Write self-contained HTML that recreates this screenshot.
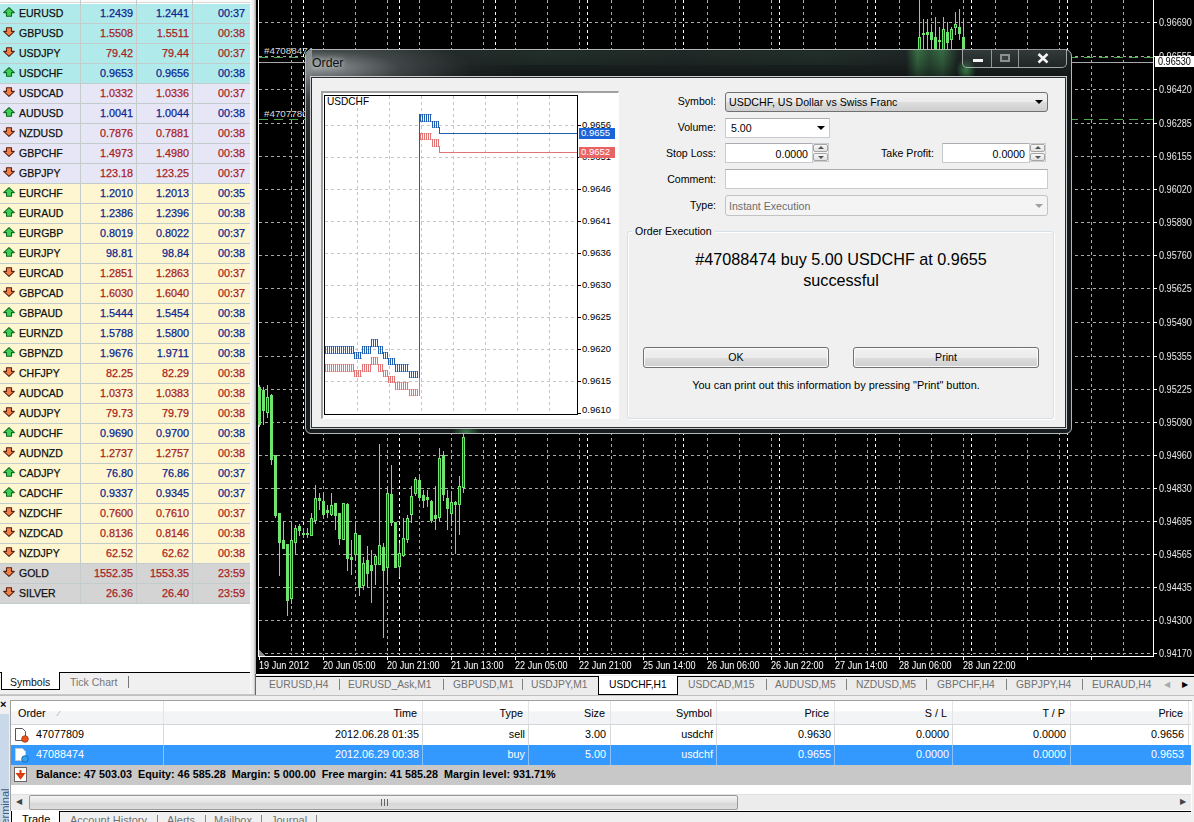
<!DOCTYPE html><html><head><meta charset="utf-8"><style>
*{margin:0;padding:0;box-sizing:border-box}
html,body{width:1194px;height:822px;overflow:hidden;background:#f0f0f0;font-family:"Liberation Sans", sans-serif;position:relative}
.a{position:absolute;white-space:nowrap}
.mw span,.tk{-webkit-text-stroke:0.25px currentColor}
.mw{position:absolute;left:0;width:250px;height:20px;border-bottom:1px solid #c3cccc;font-size:10.5px;line-height:19px}
.mw span{position:absolute;top:0}
.up{color:#0e2690}.dn{color:#a81e1e}
</style></head><body>
<div class="a" style="left:0;top:0;width:250px;height:672px;background:#fff"></div>
<div class="a" style="left:0;top:0;width:250px;height:3px;background:#fafafa;border-bottom:1px solid #d8d8d8"></div>
<div class="mw" style="top:4px;background:#b1eaea">
<svg class="a" style="left:3px;top:3px" width="12" height="10" viewBox="0 0 12 10"><path d="M6 0.7 L11.3 5.6 H8.5 V9.3 H3.5 V5.6 H0.7 Z" fill="#3fcf55" stroke="#0f6a22" stroke-width="1.1" stroke-linejoin="round"/></svg>
<span style="left:19px;color:#111">EURUSD</span>
<span class="up" style="right:117px;font-size:10.8px">1.2439</span>
<span class="up" style="right:61px;font-size:10.8px">1.2441</span>
<span class="up" style="right:5px;font-size:10.8px">00:37</span>
</div>
<div class="mw" style="top:24px;background:#b1eaea">
<svg class="a" style="left:3px;top:3px" width="12" height="10" viewBox="0 0 12 10"><path d="M3.5 0.7 H8.5 V4.4 H11.3 L6 9.3 L0.7 4.4 H3.5 Z" fill="#f08048" stroke="#5a2010" stroke-width="1.1" stroke-linejoin="round"/></svg>
<span style="left:19px;color:#111">GBPUSD</span>
<span class="dn" style="right:117px;font-size:10.8px">1.5508</span>
<span class="dn" style="right:61px;font-size:10.8px">1.5511</span>
<span class="dn" style="right:5px;font-size:10.8px">00:38</span>
</div>
<div class="mw" style="top:44px;background:#b1eaea">
<svg class="a" style="left:3px;top:3px" width="12" height="10" viewBox="0 0 12 10"><path d="M3.5 0.7 H8.5 V4.4 H11.3 L6 9.3 L0.7 4.4 H3.5 Z" fill="#f08048" stroke="#5a2010" stroke-width="1.1" stroke-linejoin="round"/></svg>
<span style="left:19px;color:#111">USDJPY</span>
<span class="dn" style="right:117px;font-size:10.8px">79.42</span>
<span class="dn" style="right:61px;font-size:10.8px">79.44</span>
<span class="dn" style="right:5px;font-size:10.8px">00:37</span>
</div>
<div class="mw" style="top:64px;background:#b1eaea">
<svg class="a" style="left:3px;top:3px" width="12" height="10" viewBox="0 0 12 10"><path d="M6 0.7 L11.3 5.6 H8.5 V9.3 H3.5 V5.6 H0.7 Z" fill="#3fcf55" stroke="#0f6a22" stroke-width="1.1" stroke-linejoin="round"/></svg>
<span style="left:19px;color:#111">USDCHF</span>
<span class="up" style="right:117px;font-size:10.8px">0.9653</span>
<span class="up" style="right:61px;font-size:10.8px">0.9656</span>
<span class="up" style="right:5px;font-size:10.8px">00:38</span>
</div>
<div class="mw" style="top:84px;background:#e6e6f7">
<svg class="a" style="left:3px;top:3px" width="12" height="10" viewBox="0 0 12 10"><path d="M3.5 0.7 H8.5 V4.4 H11.3 L6 9.3 L0.7 4.4 H3.5 Z" fill="#f08048" stroke="#5a2010" stroke-width="1.1" stroke-linejoin="round"/></svg>
<span style="left:19px;color:#111">USDCAD</span>
<span class="dn" style="right:117px;font-size:10.8px">1.0332</span>
<span class="dn" style="right:61px;font-size:10.8px">1.0336</span>
<span class="dn" style="right:5px;font-size:10.8px">00:37</span>
</div>
<div class="mw" style="top:104px;background:#e6e6f7">
<svg class="a" style="left:3px;top:3px" width="12" height="10" viewBox="0 0 12 10"><path d="M6 0.7 L11.3 5.6 H8.5 V9.3 H3.5 V5.6 H0.7 Z" fill="#3fcf55" stroke="#0f6a22" stroke-width="1.1" stroke-linejoin="round"/></svg>
<span style="left:19px;color:#111">AUDUSD</span>
<span class="up" style="right:117px;font-size:10.8px">1.0041</span>
<span class="up" style="right:61px;font-size:10.8px">1.0044</span>
<span class="up" style="right:5px;font-size:10.8px">00:38</span>
</div>
<div class="mw" style="top:124px;background:#e6e6f7">
<svg class="a" style="left:3px;top:3px" width="12" height="10" viewBox="0 0 12 10"><path d="M3.5 0.7 H8.5 V4.4 H11.3 L6 9.3 L0.7 4.4 H3.5 Z" fill="#f08048" stroke="#5a2010" stroke-width="1.1" stroke-linejoin="round"/></svg>
<span style="left:19px;color:#111">NZDUSD</span>
<span class="dn" style="right:117px;font-size:10.8px">0.7876</span>
<span class="dn" style="right:61px;font-size:10.8px">0.7881</span>
<span class="dn" style="right:5px;font-size:10.8px">00:38</span>
</div>
<div class="mw" style="top:144px;background:#e6e6f7">
<svg class="a" style="left:3px;top:3px" width="12" height="10" viewBox="0 0 12 10"><path d="M3.5 0.7 H8.5 V4.4 H11.3 L6 9.3 L0.7 4.4 H3.5 Z" fill="#f08048" stroke="#5a2010" stroke-width="1.1" stroke-linejoin="round"/></svg>
<span style="left:19px;color:#111">GBPCHF</span>
<span class="dn" style="right:117px;font-size:10.8px">1.4973</span>
<span class="dn" style="right:61px;font-size:10.8px">1.4980</span>
<span class="dn" style="right:5px;font-size:10.8px">00:38</span>
</div>
<div class="mw" style="top:164px;background:#e6e6f7">
<svg class="a" style="left:3px;top:3px" width="12" height="10" viewBox="0 0 12 10"><path d="M3.5 0.7 H8.5 V4.4 H11.3 L6 9.3 L0.7 4.4 H3.5 Z" fill="#f08048" stroke="#5a2010" stroke-width="1.1" stroke-linejoin="round"/></svg>
<span style="left:19px;color:#111">GBPJPY</span>
<span class="dn" style="right:117px;font-size:10.8px">123.18</span>
<span class="dn" style="right:61px;font-size:10.8px">123.25</span>
<span class="dn" style="right:5px;font-size:10.8px">00:37</span>
</div>
<div class="mw" style="top:184px;background:#fdf6d0">
<svg class="a" style="left:3px;top:3px" width="12" height="10" viewBox="0 0 12 10"><path d="M6 0.7 L11.3 5.6 H8.5 V9.3 H3.5 V5.6 H0.7 Z" fill="#3fcf55" stroke="#0f6a22" stroke-width="1.1" stroke-linejoin="round"/></svg>
<span style="left:19px;color:#111">EURCHF</span>
<span class="up" style="right:117px;font-size:10.8px">1.2010</span>
<span class="up" style="right:61px;font-size:10.8px">1.2013</span>
<span class="up" style="right:5px;font-size:10.8px">00:35</span>
</div>
<div class="mw" style="top:204px;background:#fdf6d0">
<svg class="a" style="left:3px;top:3px" width="12" height="10" viewBox="0 0 12 10"><path d="M6 0.7 L11.3 5.6 H8.5 V9.3 H3.5 V5.6 H0.7 Z" fill="#3fcf55" stroke="#0f6a22" stroke-width="1.1" stroke-linejoin="round"/></svg>
<span style="left:19px;color:#111">EURAUD</span>
<span class="up" style="right:117px;font-size:10.8px">1.2386</span>
<span class="up" style="right:61px;font-size:10.8px">1.2396</span>
<span class="up" style="right:5px;font-size:10.8px">00:38</span>
</div>
<div class="mw" style="top:224px;background:#fdf6d0">
<svg class="a" style="left:3px;top:3px" width="12" height="10" viewBox="0 0 12 10"><path d="M6 0.7 L11.3 5.6 H8.5 V9.3 H3.5 V5.6 H0.7 Z" fill="#3fcf55" stroke="#0f6a22" stroke-width="1.1" stroke-linejoin="round"/></svg>
<span style="left:19px;color:#111">EURGBP</span>
<span class="up" style="right:117px;font-size:10.8px">0.8019</span>
<span class="up" style="right:61px;font-size:10.8px">0.8022</span>
<span class="up" style="right:5px;font-size:10.8px">00:37</span>
</div>
<div class="mw" style="top:244px;background:#fdf6d0">
<svg class="a" style="left:3px;top:3px" width="12" height="10" viewBox="0 0 12 10"><path d="M6 0.7 L11.3 5.6 H8.5 V9.3 H3.5 V5.6 H0.7 Z" fill="#3fcf55" stroke="#0f6a22" stroke-width="1.1" stroke-linejoin="round"/></svg>
<span style="left:19px;color:#111">EURJPY</span>
<span class="up" style="right:117px;font-size:10.8px">98.81</span>
<span class="up" style="right:61px;font-size:10.8px">98.84</span>
<span class="up" style="right:5px;font-size:10.8px">00:38</span>
</div>
<div class="mw" style="top:264px;background:#fdf6d0">
<svg class="a" style="left:3px;top:3px" width="12" height="10" viewBox="0 0 12 10"><path d="M3.5 0.7 H8.5 V4.4 H11.3 L6 9.3 L0.7 4.4 H3.5 Z" fill="#f08048" stroke="#5a2010" stroke-width="1.1" stroke-linejoin="round"/></svg>
<span style="left:19px;color:#111">EURCAD</span>
<span class="dn" style="right:117px;font-size:10.8px">1.2851</span>
<span class="dn" style="right:61px;font-size:10.8px">1.2863</span>
<span class="dn" style="right:5px;font-size:10.8px">00:37</span>
</div>
<div class="mw" style="top:284px;background:#fdf6d0">
<svg class="a" style="left:3px;top:3px" width="12" height="10" viewBox="0 0 12 10"><path d="M3.5 0.7 H8.5 V4.4 H11.3 L6 9.3 L0.7 4.4 H3.5 Z" fill="#f08048" stroke="#5a2010" stroke-width="1.1" stroke-linejoin="round"/></svg>
<span style="left:19px;color:#111">GBPCAD</span>
<span class="dn" style="right:117px;font-size:10.8px">1.6030</span>
<span class="dn" style="right:61px;font-size:10.8px">1.6040</span>
<span class="dn" style="right:5px;font-size:10.8px">00:37</span>
</div>
<div class="mw" style="top:304px;background:#fdf6d0">
<svg class="a" style="left:3px;top:3px" width="12" height="10" viewBox="0 0 12 10"><path d="M6 0.7 L11.3 5.6 H8.5 V9.3 H3.5 V5.6 H0.7 Z" fill="#3fcf55" stroke="#0f6a22" stroke-width="1.1" stroke-linejoin="round"/></svg>
<span style="left:19px;color:#111">GBPAUD</span>
<span class="up" style="right:117px;font-size:10.8px">1.5444</span>
<span class="up" style="right:61px;font-size:10.8px">1.5454</span>
<span class="up" style="right:5px;font-size:10.8px">00:38</span>
</div>
<div class="mw" style="top:324px;background:#fdf6d0">
<svg class="a" style="left:3px;top:3px" width="12" height="10" viewBox="0 0 12 10"><path d="M6 0.7 L11.3 5.6 H8.5 V9.3 H3.5 V5.6 H0.7 Z" fill="#3fcf55" stroke="#0f6a22" stroke-width="1.1" stroke-linejoin="round"/></svg>
<span style="left:19px;color:#111">EURNZD</span>
<span class="up" style="right:117px;font-size:10.8px">1.5788</span>
<span class="up" style="right:61px;font-size:10.8px">1.5800</span>
<span class="up" style="right:5px;font-size:10.8px">00:38</span>
</div>
<div class="mw" style="top:344px;background:#fdf6d0">
<svg class="a" style="left:3px;top:3px" width="12" height="10" viewBox="0 0 12 10"><path d="M6 0.7 L11.3 5.6 H8.5 V9.3 H3.5 V5.6 H0.7 Z" fill="#3fcf55" stroke="#0f6a22" stroke-width="1.1" stroke-linejoin="round"/></svg>
<span style="left:19px;color:#111">GBPNZD</span>
<span class="up" style="right:117px;font-size:10.8px">1.9676</span>
<span class="up" style="right:61px;font-size:10.8px">1.9711</span>
<span class="up" style="right:5px;font-size:10.8px">00:38</span>
</div>
<div class="mw" style="top:364px;background:#fdf6d0">
<svg class="a" style="left:3px;top:3px" width="12" height="10" viewBox="0 0 12 10"><path d="M3.5 0.7 H8.5 V4.4 H11.3 L6 9.3 L0.7 4.4 H3.5 Z" fill="#f08048" stroke="#5a2010" stroke-width="1.1" stroke-linejoin="round"/></svg>
<span style="left:19px;color:#111">CHFJPY</span>
<span class="dn" style="right:117px;font-size:10.8px">82.25</span>
<span class="dn" style="right:61px;font-size:10.8px">82.29</span>
<span class="dn" style="right:5px;font-size:10.8px">00:38</span>
</div>
<div class="mw" style="top:384px;background:#fdf6d0">
<svg class="a" style="left:3px;top:3px" width="12" height="10" viewBox="0 0 12 10"><path d="M3.5 0.7 H8.5 V4.4 H11.3 L6 9.3 L0.7 4.4 H3.5 Z" fill="#f08048" stroke="#5a2010" stroke-width="1.1" stroke-linejoin="round"/></svg>
<span style="left:19px;color:#111">AUDCAD</span>
<span class="dn" style="right:117px;font-size:10.8px">1.0373</span>
<span class="dn" style="right:61px;font-size:10.8px">1.0383</span>
<span class="dn" style="right:5px;font-size:10.8px">00:38</span>
</div>
<div class="mw" style="top:404px;background:#fdf6d0">
<svg class="a" style="left:3px;top:3px" width="12" height="10" viewBox="0 0 12 10"><path d="M3.5 0.7 H8.5 V4.4 H11.3 L6 9.3 L0.7 4.4 H3.5 Z" fill="#f08048" stroke="#5a2010" stroke-width="1.1" stroke-linejoin="round"/></svg>
<span style="left:19px;color:#111">AUDJPY</span>
<span class="dn" style="right:117px;font-size:10.8px">79.73</span>
<span class="dn" style="right:61px;font-size:10.8px">79.79</span>
<span class="dn" style="right:5px;font-size:10.8px">00:38</span>
</div>
<div class="mw" style="top:424px;background:#fdf6d0">
<svg class="a" style="left:3px;top:3px" width="12" height="10" viewBox="0 0 12 10"><path d="M6 0.7 L11.3 5.6 H8.5 V9.3 H3.5 V5.6 H0.7 Z" fill="#3fcf55" stroke="#0f6a22" stroke-width="1.1" stroke-linejoin="round"/></svg>
<span style="left:19px;color:#111">AUDCHF</span>
<span class="up" style="right:117px;font-size:10.8px">0.9690</span>
<span class="up" style="right:61px;font-size:10.8px">0.9700</span>
<span class="up" style="right:5px;font-size:10.8px">00:38</span>
</div>
<div class="mw" style="top:444px;background:#fdf6d0">
<svg class="a" style="left:3px;top:3px" width="12" height="10" viewBox="0 0 12 10"><path d="M3.5 0.7 H8.5 V4.4 H11.3 L6 9.3 L0.7 4.4 H3.5 Z" fill="#f08048" stroke="#5a2010" stroke-width="1.1" stroke-linejoin="round"/></svg>
<span style="left:19px;color:#111">AUDNZD</span>
<span class="dn" style="right:117px;font-size:10.8px">1.2737</span>
<span class="dn" style="right:61px;font-size:10.8px">1.2757</span>
<span class="dn" style="right:5px;font-size:10.8px">00:38</span>
</div>
<div class="mw" style="top:464px;background:#fdf6d0">
<svg class="a" style="left:3px;top:3px" width="12" height="10" viewBox="0 0 12 10"><path d="M6 0.7 L11.3 5.6 H8.5 V9.3 H3.5 V5.6 H0.7 Z" fill="#3fcf55" stroke="#0f6a22" stroke-width="1.1" stroke-linejoin="round"/></svg>
<span style="left:19px;color:#111">CADJPY</span>
<span class="up" style="right:117px;font-size:10.8px">76.80</span>
<span class="up" style="right:61px;font-size:10.8px">76.86</span>
<span class="up" style="right:5px;font-size:10.8px">00:37</span>
</div>
<div class="mw" style="top:484px;background:#fdf6d0">
<svg class="a" style="left:3px;top:3px" width="12" height="10" viewBox="0 0 12 10"><path d="M6 0.7 L11.3 5.6 H8.5 V9.3 H3.5 V5.6 H0.7 Z" fill="#3fcf55" stroke="#0f6a22" stroke-width="1.1" stroke-linejoin="round"/></svg>
<span style="left:19px;color:#111">CADCHF</span>
<span class="up" style="right:117px;font-size:10.8px">0.9337</span>
<span class="up" style="right:61px;font-size:10.8px">0.9345</span>
<span class="up" style="right:5px;font-size:10.8px">00:37</span>
</div>
<div class="mw" style="top:504px;background:#fdf6d0">
<svg class="a" style="left:3px;top:3px" width="12" height="10" viewBox="0 0 12 10"><path d="M3.5 0.7 H8.5 V4.4 H11.3 L6 9.3 L0.7 4.4 H3.5 Z" fill="#f08048" stroke="#5a2010" stroke-width="1.1" stroke-linejoin="round"/></svg>
<span style="left:19px;color:#111">NZDCHF</span>
<span class="dn" style="right:117px;font-size:10.8px">0.7600</span>
<span class="dn" style="right:61px;font-size:10.8px">0.7610</span>
<span class="dn" style="right:5px;font-size:10.8px">00:37</span>
</div>
<div class="mw" style="top:524px;background:#fdf6d0">
<svg class="a" style="left:3px;top:3px" width="12" height="10" viewBox="0 0 12 10"><path d="M3.5 0.7 H8.5 V4.4 H11.3 L6 9.3 L0.7 4.4 H3.5 Z" fill="#f08048" stroke="#5a2010" stroke-width="1.1" stroke-linejoin="round"/></svg>
<span style="left:19px;color:#111">NZDCAD</span>
<span class="dn" style="right:117px;font-size:10.8px">0.8136</span>
<span class="dn" style="right:61px;font-size:10.8px">0.8146</span>
<span class="dn" style="right:5px;font-size:10.8px">00:38</span>
</div>
<div class="mw" style="top:544px;background:#fdf6d0">
<svg class="a" style="left:3px;top:3px" width="12" height="10" viewBox="0 0 12 10"><path d="M3.5 0.7 H8.5 V4.4 H11.3 L6 9.3 L0.7 4.4 H3.5 Z" fill="#f08048" stroke="#5a2010" stroke-width="1.1" stroke-linejoin="round"/></svg>
<span style="left:19px;color:#111">NZDJPY</span>
<span class="dn" style="right:117px;font-size:10.8px">62.52</span>
<span class="dn" style="right:61px;font-size:10.8px">62.62</span>
<span class="dn" style="right:5px;font-size:10.8px">00:38</span>
</div>
<div class="mw" style="top:564px;background:#d4d4d4">
<svg class="a" style="left:3px;top:3px" width="12" height="10" viewBox="0 0 12 10"><path d="M3.5 0.7 H8.5 V4.4 H11.3 L6 9.3 L0.7 4.4 H3.5 Z" fill="#f08048" stroke="#5a2010" stroke-width="1.1" stroke-linejoin="round"/></svg>
<span style="left:19px;color:#111">GOLD</span>
<span class="dn" style="right:117px;font-size:10.8px">1552.35</span>
<span class="dn" style="right:61px;font-size:10.8px">1553.35</span>
<span class="dn" style="right:5px;font-size:10.8px">23:59</span>
</div>
<div class="mw" style="top:584px;background:#d4d4d4">
<svg class="a" style="left:3px;top:3px" width="12" height="10" viewBox="0 0 12 10"><path d="M3.5 0.7 H8.5 V4.4 H11.3 L6 9.3 L0.7 4.4 H3.5 Z" fill="#f08048" stroke="#5a2010" stroke-width="1.1" stroke-linejoin="round"/></svg>
<span style="left:19px;color:#111">SILVER</span>
<span class="dn" style="right:117px;font-size:10.8px">26.36</span>
<span class="dn" style="right:61px;font-size:10.8px">26.40</span>
<span class="dn" style="right:5px;font-size:10.8px">23:59</span>
</div>
<div class="a" style="left:80px;top:0;width:1px;height:603px;background:#c4cccc"></div>
<div class="a" style="left:136px;top:0;width:1px;height:603px;background:#c4cccc"></div>
<div class="a" style="left:192px;top:0;width:1px;height:603px;background:#c4cccc"></div>
<div class="a" style="left:0;top:672px;width:250px;height:1px;background:#000"></div>
<div class="a" style="left:1px;top:672px;width:59px;height:18px;background:#fff;border:1px solid #000;border-top:none"></div>
<div class="a" style="left:10px;top:676px;font-size:10.5px;color:#111">Symbols</div>
<div class="a" style="left:70px;top:676px;font-size:10.5px;color:#777">Tick Chart</div>
<div class="a" style="left:128px;top:676px;width:1px;height:12px;background:#777"></div>
<div class="a" style="left:250px;top:0;width:6px;height:696px;background:linear-gradient(90deg,#fafafa,#e8e8e8 60%,#a0a0a0)"></div>
<div class="a" style="left:0;top:694px;width:256px;height:2px;background:#c8c8c8"></div>
<div class="a" style="left:256px;top:0;width:938px;height:674px;background:#000"></div>
<svg class="a" style="left:0;top:0" width="1194" height="674" viewBox="0 0 1194 674" shape-rendering="crispEdges">
<line x1="259" y1="22.5" x2="1153" y2="22.5" stroke="#a9a9a9" stroke-width="1" stroke-dasharray="3 3"/>
<line x1="259" y1="56.5" x2="1153" y2="56.5" stroke="#a9a9a9" stroke-width="1" stroke-dasharray="3 3"/>
<line x1="259" y1="89.5" x2="1153" y2="89.5" stroke="#a9a9a9" stroke-width="1" stroke-dasharray="3 3"/>
<line x1="259" y1="123.5" x2="1153" y2="123.5" stroke="#a9a9a9" stroke-width="1" stroke-dasharray="3 3"/>
<line x1="259" y1="156.5" x2="1153" y2="156.5" stroke="#a9a9a9" stroke-width="1" stroke-dasharray="3 3"/>
<line x1="259" y1="189.5" x2="1153" y2="189.5" stroke="#a9a9a9" stroke-width="1" stroke-dasharray="3 3"/>
<line x1="259" y1="222.5" x2="1153" y2="222.5" stroke="#a9a9a9" stroke-width="1" stroke-dasharray="3 3"/>
<line x1="259" y1="255.5" x2="1153" y2="255.5" stroke="#a9a9a9" stroke-width="1" stroke-dasharray="3 3"/>
<line x1="259" y1="288.5" x2="1153" y2="288.5" stroke="#a9a9a9" stroke-width="1" stroke-dasharray="3 3"/>
<line x1="259" y1="322.5" x2="1153" y2="322.5" stroke="#a9a9a9" stroke-width="1" stroke-dasharray="3 3"/>
<line x1="259" y1="356.5" x2="1153" y2="356.5" stroke="#a9a9a9" stroke-width="1" stroke-dasharray="3 3"/>
<line x1="259" y1="389.5" x2="1153" y2="389.5" stroke="#a9a9a9" stroke-width="1" stroke-dasharray="3 3"/>
<line x1="259" y1="422.5" x2="1153" y2="422.5" stroke="#a9a9a9" stroke-width="1" stroke-dasharray="3 3"/>
<line x1="259" y1="455.5" x2="1153" y2="455.5" stroke="#a9a9a9" stroke-width="1" stroke-dasharray="3 3"/>
<line x1="259" y1="488.5" x2="1153" y2="488.5" stroke="#a9a9a9" stroke-width="1" stroke-dasharray="3 3"/>
<line x1="259" y1="521.5" x2="1153" y2="521.5" stroke="#a9a9a9" stroke-width="1" stroke-dasharray="3 3"/>
<line x1="259" y1="554.5" x2="1153" y2="554.5" stroke="#a9a9a9" stroke-width="1" stroke-dasharray="3 3"/>
<line x1="259" y1="587.5" x2="1153" y2="587.5" stroke="#a9a9a9" stroke-width="1" stroke-dasharray="3 3"/>
<line x1="259" y1="620.5" x2="1153" y2="620.5" stroke="#a9a9a9" stroke-width="1" stroke-dasharray="3 3"/>
<line x1="259" y1="653.5" x2="1153" y2="653.5" stroke="#a9a9a9" stroke-width="1" stroke-dasharray="3 3"/>
<line x1="291.5" y1="0" x2="291.5" y2="655" stroke="#a9a9a9" stroke-width="1" stroke-dasharray="3 3"/>
<line x1="323.5" y1="0" x2="323.5" y2="655" stroke="#a9a9a9" stroke-width="1" stroke-dasharray="3 3"/>
<line x1="355.5" y1="0" x2="355.5" y2="655" stroke="#a9a9a9" stroke-width="1" stroke-dasharray="3 3"/>
<line x1="387.5" y1="0" x2="387.5" y2="655" stroke="#a9a9a9" stroke-width="1" stroke-dasharray="3 3"/>
<line x1="419.5" y1="0" x2="419.5" y2="655" stroke="#a9a9a9" stroke-width="1" stroke-dasharray="3 3"/>
<line x1="451.5" y1="0" x2="451.5" y2="655" stroke="#a9a9a9" stroke-width="1" stroke-dasharray="3 3"/>
<line x1="483.5" y1="0" x2="483.5" y2="655" stroke="#a9a9a9" stroke-width="1" stroke-dasharray="3 3"/>
<line x1="515.5" y1="0" x2="515.5" y2="655" stroke="#a9a9a9" stroke-width="1" stroke-dasharray="3 3"/>
<line x1="547.5" y1="0" x2="547.5" y2="655" stroke="#a9a9a9" stroke-width="1" stroke-dasharray="3 3"/>
<line x1="579.5" y1="0" x2="579.5" y2="655" stroke="#a9a9a9" stroke-width="1" stroke-dasharray="3 3"/>
<line x1="611.5" y1="0" x2="611.5" y2="655" stroke="#a9a9a9" stroke-width="1" stroke-dasharray="3 3"/>
<line x1="643.5" y1="0" x2="643.5" y2="655" stroke="#a9a9a9" stroke-width="1" stroke-dasharray="3 3"/>
<line x1="675.5" y1="0" x2="675.5" y2="655" stroke="#a9a9a9" stroke-width="1" stroke-dasharray="3 3"/>
<line x1="707.5" y1="0" x2="707.5" y2="655" stroke="#a9a9a9" stroke-width="1" stroke-dasharray="3 3"/>
<line x1="739.5" y1="0" x2="739.5" y2="655" stroke="#a9a9a9" stroke-width="1" stroke-dasharray="3 3"/>
<line x1="771.5" y1="0" x2="771.5" y2="655" stroke="#a9a9a9" stroke-width="1" stroke-dasharray="3 3"/>
<line x1="803.5" y1="0" x2="803.5" y2="655" stroke="#a9a9a9" stroke-width="1" stroke-dasharray="3 3"/>
<line x1="835.5" y1="0" x2="835.5" y2="655" stroke="#a9a9a9" stroke-width="1" stroke-dasharray="3 3"/>
<line x1="867.5" y1="0" x2="867.5" y2="655" stroke="#a9a9a9" stroke-width="1" stroke-dasharray="3 3"/>
<line x1="899.5" y1="0" x2="899.5" y2="655" stroke="#a9a9a9" stroke-width="1" stroke-dasharray="3 3"/>
<line x1="931.5" y1="0" x2="931.5" y2="655" stroke="#a9a9a9" stroke-width="1" stroke-dasharray="3 3"/>
<line x1="963.5" y1="0" x2="963.5" y2="655" stroke="#a9a9a9" stroke-width="1" stroke-dasharray="3 3"/>
<line x1="995.5" y1="0" x2="995.5" y2="655" stroke="#a9a9a9" stroke-width="1" stroke-dasharray="3 3"/>
<line x1="1027.5" y1="0" x2="1027.5" y2="655" stroke="#a9a9a9" stroke-width="1" stroke-dasharray="3 3"/>
<line x1="1059.5" y1="0" x2="1059.5" y2="655" stroke="#a9a9a9" stroke-width="1" stroke-dasharray="3 3"/>
<line x1="1091.5" y1="0" x2="1091.5" y2="655" stroke="#a9a9a9" stroke-width="1" stroke-dasharray="3 3"/>
<line x1="1123.5" y1="0" x2="1123.5" y2="655" stroke="#a9a9a9" stroke-width="1" stroke-dasharray="3 3"/>
<line x1="303.5" y1="0" x2="303.5" y2="655" stroke="#ffffff" stroke-width="1.6" stroke-dasharray="3 3"/>
<line x1="399.5" y1="0" x2="399.5" y2="655" stroke="#ffffff" stroke-width="1.6" stroke-dasharray="3 3"/>
<line x1="495.5" y1="0" x2="495.5" y2="655" stroke="#ffffff" stroke-width="1.6" stroke-dasharray="3 3"/>
<line x1="587.5" y1="0" x2="587.5" y2="655" stroke="#ffffff" stroke-width="1.6" stroke-dasharray="3 3"/>
<line x1="683.5" y1="0" x2="683.5" y2="655" stroke="#ffffff" stroke-width="1.6" stroke-dasharray="3 3"/>
<line x1="779.5" y1="0" x2="779.5" y2="655" stroke="#ffffff" stroke-width="1.6" stroke-dasharray="3 3"/>
<line x1="875.5" y1="0" x2="875.5" y2="655" stroke="#ffffff" stroke-width="1.6" stroke-dasharray="3 3"/>
<line x1="971.5" y1="0" x2="971.5" y2="655" stroke="#ffffff" stroke-width="1.6" stroke-dasharray="3 3"/>
<line x1="1067.5" y1="0" x2="1067.5" y2="655" stroke="#ffffff" stroke-width="1.6" stroke-dasharray="3 3"/>
<line x1="258.5" y1="0" x2="258.5" y2="657" stroke="#fff" stroke-width="1"/>
<line x1="258" y1="656.5" x2="1154" y2="656.5" stroke="#fff" stroke-width="1"/>
<line x1="1153.5" y1="0" x2="1153.5" y2="656" stroke="#fff" stroke-width="1"/>
<line x1="1153" y1="22.5" x2="1157" y2="22.5" stroke="#fff" stroke-width="1"/>
<line x1="1153" y1="56.5" x2="1157" y2="56.5" stroke="#fff" stroke-width="1"/>
<line x1="1153" y1="89.5" x2="1157" y2="89.5" stroke="#fff" stroke-width="1"/>
<line x1="1153" y1="123.5" x2="1157" y2="123.5" stroke="#fff" stroke-width="1"/>
<line x1="1153" y1="156.5" x2="1157" y2="156.5" stroke="#fff" stroke-width="1"/>
<line x1="1153" y1="189.5" x2="1157" y2="189.5" stroke="#fff" stroke-width="1"/>
<line x1="1153" y1="222.5" x2="1157" y2="222.5" stroke="#fff" stroke-width="1"/>
<line x1="1153" y1="255.5" x2="1157" y2="255.5" stroke="#fff" stroke-width="1"/>
<line x1="1153" y1="288.5" x2="1157" y2="288.5" stroke="#fff" stroke-width="1"/>
<line x1="1153" y1="322.5" x2="1157" y2="322.5" stroke="#fff" stroke-width="1"/>
<line x1="1153" y1="356.5" x2="1157" y2="356.5" stroke="#fff" stroke-width="1"/>
<line x1="1153" y1="389.5" x2="1157" y2="389.5" stroke="#fff" stroke-width="1"/>
<line x1="1153" y1="422.5" x2="1157" y2="422.5" stroke="#fff" stroke-width="1"/>
<line x1="1153" y1="455.5" x2="1157" y2="455.5" stroke="#fff" stroke-width="1"/>
<line x1="1153" y1="488.5" x2="1157" y2="488.5" stroke="#fff" stroke-width="1"/>
<line x1="1153" y1="521.5" x2="1157" y2="521.5" stroke="#fff" stroke-width="1"/>
<line x1="1153" y1="554.5" x2="1157" y2="554.5" stroke="#fff" stroke-width="1"/>
<line x1="1153" y1="587.5" x2="1157" y2="587.5" stroke="#fff" stroke-width="1"/>
<line x1="1153" y1="620.5" x2="1157" y2="620.5" stroke="#fff" stroke-width="1"/>
<line x1="1153" y1="653.5" x2="1157" y2="653.5" stroke="#fff" stroke-width="1"/>
<line x1="259.5" y1="656" x2="259.5" y2="660" stroke="#fff" stroke-width="1"/>
<line x1="323.5" y1="656" x2="323.5" y2="660" stroke="#fff" stroke-width="1"/>
<line x1="387.5" y1="656" x2="387.5" y2="660" stroke="#fff" stroke-width="1"/>
<line x1="451.5" y1="656" x2="451.5" y2="660" stroke="#fff" stroke-width="1"/>
<line x1="515.5" y1="656" x2="515.5" y2="660" stroke="#fff" stroke-width="1"/>
<line x1="579.5" y1="656" x2="579.5" y2="660" stroke="#fff" stroke-width="1"/>
<line x1="643.5" y1="656" x2="643.5" y2="660" stroke="#fff" stroke-width="1"/>
<line x1="707.5" y1="656" x2="707.5" y2="660" stroke="#fff" stroke-width="1"/>
<line x1="771.5" y1="656" x2="771.5" y2="660" stroke="#fff" stroke-width="1"/>
<line x1="835.5" y1="656" x2="835.5" y2="660" stroke="#fff" stroke-width="1"/>
<line x1="899.5" y1="656" x2="899.5" y2="660" stroke="#fff" stroke-width="1"/>
<line x1="963.5" y1="656" x2="963.5" y2="660" stroke="#fff" stroke-width="1"/>
<line x1="1027.5" y1="656" x2="1027.5" y2="660" stroke="#fff" stroke-width="1"/>
<line x1="1091.5" y1="656" x2="1091.5" y2="660" stroke="#fff" stroke-width="1"/>
<line x1="259" y1="57.5" x2="1153" y2="57.5" stroke="#4aa84a" stroke-width="1" stroke-dasharray="9 6"/>
<line x1="259" y1="119.5" x2="1153" y2="119.5" stroke="#4aa84a" stroke-width="1" stroke-dasharray="9 6"/>
<line x1="259" y1="62.5" x2="1153" y2="62.5" stroke="#a8a8a8" stroke-width="1"/>
<path d="M259 649 L265 656 H259 Z" fill="#8a8a8a"/>
<g shape-rendering="crispEdges">
<rect x="259" y="385" width="1" height="42" fill="#6fe56f"/>
<rect x="258" y="387" width="3" height="38" fill="#6fe56f"/>
<rect x="263" y="387" width="1" height="38" fill="#6fe56f"/>
<rect x="262" y="390" width="3" height="21" fill="#6fe56f"/>
<rect x="267" y="385" width="1" height="33" fill="#6fe56f"/>
<rect x="266" y="397" width="3" height="16" fill="#6fe56f"/>
<rect x="267" y="398" width="1" height="14" fill="#1f5a1f"/>
<rect x="271" y="394" width="1" height="71" fill="#6fe56f"/>
<rect x="270" y="395" width="3" height="65" fill="#6fe56f"/>
<rect x="275" y="455" width="1" height="63" fill="#6fe56f"/>
<rect x="274" y="455" width="3" height="61" fill="#6fe56f"/>
<rect x="279" y="513" width="1" height="63" fill="#6fe56f"/>
<rect x="278" y="513" width="3" height="30" fill="#6fe56f"/>
<rect x="283" y="522" width="1" height="27" fill="#6fe56f"/>
<rect x="282" y="540" width="3" height="9" fill="#6fe56f"/>
<rect x="287" y="544" width="1" height="72" fill="#6fe56f"/>
<rect x="286" y="544" width="3" height="57" fill="#6fe56f"/>
<rect x="291" y="522" width="1" height="82" fill="#6fe56f"/>
<rect x="290" y="540" width="3" height="59" fill="#6fe56f"/>
<rect x="291" y="541" width="1" height="57" fill="#1f5a1f"/>
<rect x="295" y="525" width="1" height="29" fill="#6fe56f"/>
<rect x="294" y="528" width="3" height="15" fill="#6fe56f"/>
<rect x="295" y="529" width="1" height="13" fill="#1f5a1f"/>
<rect x="299" y="524" width="1" height="12" fill="#6fe56f"/>
<rect x="298" y="526" width="3" height="5" fill="#6fe56f"/>
<rect x="303" y="528" width="1" height="10" fill="#6fe56f"/>
<rect x="302" y="533" width="3" height="2" fill="#6fe56f"/>
<rect x="307" y="528" width="1" height="10" fill="#6fe56f"/>
<rect x="306" y="533" width="3" height="2" fill="#6fe56f"/>
<rect x="311" y="513" width="1" height="23" fill="#6fe56f"/>
<rect x="310" y="518" width="3" height="18" fill="#6fe56f"/>
<rect x="311" y="519" width="1" height="16" fill="#1f5a1f"/>
<rect x="315" y="485" width="1" height="39" fill="#6fe56f"/>
<rect x="314" y="498" width="3" height="23" fill="#6fe56f"/>
<rect x="315" y="499" width="1" height="21" fill="#1f5a1f"/>
<rect x="319" y="493" width="1" height="17" fill="#6fe56f"/>
<rect x="318" y="498" width="3" height="3" fill="#6fe56f"/>
<rect x="323" y="493" width="1" height="26" fill="#6fe56f"/>
<rect x="322" y="501" width="3" height="14" fill="#6fe56f"/>
<rect x="327" y="505" width="1" height="13" fill="#6fe56f"/>
<rect x="326" y="510" width="3" height="3" fill="#6fe56f"/>
<rect x="331" y="493" width="1" height="23" fill="#6fe56f"/>
<rect x="330" y="505" width="3" height="10" fill="#6fe56f"/>
<rect x="331" y="506" width="1" height="8" fill="#1f5a1f"/>
<rect x="335" y="503" width="1" height="27" fill="#6fe56f"/>
<rect x="334" y="503" width="3" height="13" fill="#6fe56f"/>
<rect x="339" y="513" width="1" height="32" fill="#6fe56f"/>
<rect x="338" y="513" width="3" height="26" fill="#6fe56f"/>
<rect x="343" y="503" width="1" height="37" fill="#6fe56f"/>
<rect x="342" y="503" width="3" height="37" fill="#6fe56f"/>
<rect x="343" y="504" width="1" height="35" fill="#1f5a1f"/>
<rect x="347" y="503" width="1" height="68" fill="#6fe56f"/>
<rect x="346" y="504" width="3" height="55" fill="#6fe56f"/>
<rect x="351" y="540" width="1" height="35" fill="#6fe56f"/>
<rect x="350" y="557" width="3" height="3" fill="#6fe56f"/>
<rect x="355" y="524" width="1" height="36" fill="#6fe56f"/>
<rect x="354" y="533" width="3" height="22" fill="#6fe56f"/>
<rect x="355" y="534" width="1" height="20" fill="#1f5a1f"/>
<rect x="359" y="535" width="1" height="61" fill="#6fe56f"/>
<rect x="358" y="535" width="3" height="53" fill="#6fe56f"/>
<rect x="363" y="557" width="1" height="33" fill="#6fe56f"/>
<rect x="362" y="563" width="3" height="23" fill="#6fe56f"/>
<rect x="363" y="564" width="1" height="21" fill="#1f5a1f"/>
<rect x="367" y="546" width="1" height="42" fill="#6fe56f"/>
<rect x="366" y="560" width="3" height="14" fill="#6fe56f"/>
<rect x="371" y="550" width="1" height="53" fill="#6fe56f"/>
<rect x="370" y="565" width="3" height="6" fill="#6fe56f"/>
<rect x="375" y="555" width="1" height="30" fill="#6fe56f"/>
<rect x="374" y="556" width="3" height="9" fill="#6fe56f"/>
<rect x="375" y="557" width="1" height="7" fill="#1f5a1f"/>
<rect x="379" y="444" width="1" height="121" fill="#6fe56f"/>
<rect x="378" y="545" width="3" height="20" fill="#6fe56f"/>
<rect x="379" y="546" width="1" height="18" fill="#1f5a1f"/>
<rect x="383" y="543" width="1" height="95" fill="#6fe56f"/>
<rect x="382" y="547" width="3" height="24" fill="#6fe56f"/>
<rect x="387" y="487" width="1" height="98" fill="#6fe56f"/>
<rect x="386" y="493" width="3" height="75" fill="#6fe56f"/>
<rect x="387" y="494" width="1" height="73" fill="#1f5a1f"/>
<rect x="391" y="465" width="1" height="61" fill="#6fe56f"/>
<rect x="390" y="494" width="3" height="29" fill="#6fe56f"/>
<rect x="395" y="522" width="1" height="46" fill="#6fe56f"/>
<rect x="394" y="522" width="3" height="46" fill="#6fe56f"/>
<rect x="399" y="543" width="1" height="34" fill="#6fe56f"/>
<rect x="398" y="553" width="3" height="14" fill="#6fe56f"/>
<rect x="399" y="554" width="1" height="12" fill="#1f5a1f"/>
<rect x="403" y="518" width="1" height="39" fill="#6fe56f"/>
<rect x="402" y="538" width="3" height="18" fill="#6fe56f"/>
<rect x="403" y="539" width="1" height="16" fill="#1f5a1f"/>
<rect x="407" y="515" width="1" height="28" fill="#6fe56f"/>
<rect x="406" y="518" width="3" height="22" fill="#6fe56f"/>
<rect x="407" y="519" width="1" height="20" fill="#1f5a1f"/>
<rect x="411" y="486" width="1" height="37" fill="#6fe56f"/>
<rect x="410" y="496" width="3" height="19" fill="#6fe56f"/>
<rect x="411" y="497" width="1" height="17" fill="#1f5a1f"/>
<rect x="415" y="477" width="1" height="19" fill="#6fe56f"/>
<rect x="414" y="479" width="3" height="15" fill="#6fe56f"/>
<rect x="415" y="480" width="1" height="13" fill="#1f5a1f"/>
<rect x="419" y="477" width="1" height="24" fill="#6fe56f"/>
<rect x="418" y="480" width="3" height="18" fill="#6fe56f"/>
<rect x="423" y="490" width="1" height="18" fill="#6fe56f"/>
<rect x="422" y="495" width="3" height="6" fill="#6fe56f"/>
<rect x="427" y="490" width="1" height="17" fill="#6fe56f"/>
<rect x="426" y="497" width="3" height="3" fill="#6fe56f"/>
<rect x="431" y="500" width="1" height="23" fill="#6fe56f"/>
<rect x="430" y="501" width="3" height="20" fill="#6fe56f"/>
<rect x="435" y="486" width="1" height="44" fill="#6fe56f"/>
<rect x="434" y="515" width="3" height="4" fill="#6fe56f"/>
<rect x="439" y="448" width="1" height="73" fill="#6fe56f"/>
<rect x="438" y="458" width="3" height="60" fill="#6fe56f"/>
<rect x="439" y="459" width="1" height="58" fill="#1f5a1f"/>
<rect x="443" y="451" width="1" height="50" fill="#6fe56f"/>
<rect x="442" y="455" width="3" height="40" fill="#6fe56f"/>
<rect x="447" y="490" width="1" height="40" fill="#6fe56f"/>
<rect x="446" y="498" width="3" height="11" fill="#6fe56f"/>
<rect x="451" y="491" width="1" height="35" fill="#6fe56f"/>
<rect x="450" y="502" width="3" height="12" fill="#6fe56f"/>
<rect x="451" y="503" width="1" height="10" fill="#1f5a1f"/>
<rect x="455" y="501" width="1" height="53" fill="#6fe56f"/>
<rect x="454" y="502" width="3" height="3" fill="#6fe56f"/>
<rect x="459" y="476" width="1" height="59" fill="#6fe56f"/>
<rect x="458" y="486" width="3" height="19" fill="#6fe56f"/>
<rect x="459" y="487" width="1" height="17" fill="#1f5a1f"/>
<rect x="463" y="430" width="1" height="63" fill="#6fe56f"/>
<rect x="462" y="437" width="3" height="51" fill="#6fe56f"/>
<rect x="463" y="438" width="1" height="49" fill="#1f5a1f"/>
<rect x="919" y="-5" width="1" height="55" fill="#6fe56f"/>
<rect x="918" y="37" width="3" height="13" fill="#6fe56f"/>
<rect x="919" y="38" width="1" height="11" fill="#1f5a1f"/>
<rect x="923" y="19" width="1" height="31" fill="#6fe56f"/>
<rect x="922" y="33" width="3" height="2" fill="#6fe56f"/>
<rect x="927" y="19" width="1" height="31" fill="#6fe56f"/>
<rect x="926" y="32" width="3" height="3" fill="#6fe56f"/>
<rect x="931" y="25" width="1" height="25" fill="#6fe56f"/>
<rect x="930" y="32" width="3" height="8" fill="#6fe56f"/>
<rect x="935" y="17" width="1" height="33" fill="#6fe56f"/>
<rect x="934" y="37" width="3" height="13" fill="#6fe56f"/>
<rect x="939" y="27" width="1" height="23" fill="#6fe56f"/>
<rect x="938" y="40" width="3" height="2" fill="#6fe56f"/>
<rect x="943" y="17" width="1" height="33" fill="#6fe56f"/>
<rect x="942" y="29" width="3" height="21" fill="#6fe56f"/>
<rect x="943" y="30" width="1" height="19" fill="#1f5a1f"/>
<rect x="947" y="22" width="1" height="28" fill="#6fe56f"/>
<rect x="946" y="32" width="3" height="11" fill="#6fe56f"/>
<rect x="951" y="27" width="1" height="23" fill="#6fe56f"/>
<rect x="950" y="29" width="3" height="11" fill="#6fe56f"/>
<rect x="951" y="30" width="1" height="9" fill="#1f5a1f"/>
<rect x="955" y="12" width="1" height="23" fill="#6fe56f"/>
<rect x="954" y="24" width="3" height="4" fill="#6fe56f"/>
<rect x="955" y="25" width="1" height="2" fill="#1f5a1f"/>
<rect x="959" y="9" width="1" height="31" fill="#6fe56f"/>
<rect x="958" y="27" width="3" height="7" fill="#6fe56f"/>
<rect x="963" y="19" width="1" height="31" fill="#6fe56f"/>
<rect x="962" y="37" width="3" height="13" fill="#6fe56f"/>
</g>
</svg>
<div class="a" style="left:1159px;top:17px;font-size:10px;line-height:12px;color:#e8e8e8;transform:scaleX(0.91);transform-origin:0 0">0.96690</div>
<div class="a" style="left:1159px;top:51px;font-size:10px;line-height:12px;color:#e8e8e8;transform:scaleX(0.91);transform-origin:0 0">0.96555</div>
<div class="a" style="left:1159px;top:84px;font-size:10px;line-height:12px;color:#e8e8e8;transform:scaleX(0.91);transform-origin:0 0">0.96420</div>
<div class="a" style="left:1159px;top:118px;font-size:10px;line-height:12px;color:#e8e8e8;transform:scaleX(0.91);transform-origin:0 0">0.96285</div>
<div class="a" style="left:1159px;top:151px;font-size:10px;line-height:12px;color:#e8e8e8;transform:scaleX(0.91);transform-origin:0 0">0.96155</div>
<div class="a" style="left:1159px;top:184px;font-size:10px;line-height:12px;color:#e8e8e8;transform:scaleX(0.91);transform-origin:0 0">0.96020</div>
<div class="a" style="left:1159px;top:217px;font-size:10px;line-height:12px;color:#e8e8e8;transform:scaleX(0.91);transform-origin:0 0">0.95890</div>
<div class="a" style="left:1159px;top:250px;font-size:10px;line-height:12px;color:#e8e8e8;transform:scaleX(0.91);transform-origin:0 0">0.95760</div>
<div class="a" style="left:1159px;top:283px;font-size:10px;line-height:12px;color:#e8e8e8;transform:scaleX(0.91);transform-origin:0 0">0.95625</div>
<div class="a" style="left:1159px;top:317px;font-size:10px;line-height:12px;color:#e8e8e8;transform:scaleX(0.91);transform-origin:0 0">0.95490</div>
<div class="a" style="left:1159px;top:351px;font-size:10px;line-height:12px;color:#e8e8e8;transform:scaleX(0.91);transform-origin:0 0">0.95355</div>
<div class="a" style="left:1159px;top:384px;font-size:10px;line-height:12px;color:#e8e8e8;transform:scaleX(0.91);transform-origin:0 0">0.95225</div>
<div class="a" style="left:1159px;top:417px;font-size:10px;line-height:12px;color:#e8e8e8;transform:scaleX(0.91);transform-origin:0 0">0.95090</div>
<div class="a" style="left:1159px;top:450px;font-size:10px;line-height:12px;color:#e8e8e8;transform:scaleX(0.91);transform-origin:0 0">0.94960</div>
<div class="a" style="left:1159px;top:483px;font-size:10px;line-height:12px;color:#e8e8e8;transform:scaleX(0.91);transform-origin:0 0">0.94830</div>
<div class="a" style="left:1159px;top:516px;font-size:10px;line-height:12px;color:#e8e8e8;transform:scaleX(0.91);transform-origin:0 0">0.94695</div>
<div class="a" style="left:1159px;top:549px;font-size:10px;line-height:12px;color:#e8e8e8;transform:scaleX(0.91);transform-origin:0 0">0.94565</div>
<div class="a" style="left:1159px;top:582px;font-size:10px;line-height:12px;color:#e8e8e8;transform:scaleX(0.91);transform-origin:0 0">0.94435</div>
<div class="a" style="left:1159px;top:615px;font-size:10px;line-height:12px;color:#e8e8e8;transform:scaleX(0.91);transform-origin:0 0">0.94300</div>
<div class="a" style="left:1159px;top:648px;font-size:10px;line-height:12px;color:#e8e8e8;transform:scaleX(0.91);transform-origin:0 0">0.94170</div>
<div class="a" style="left:1155px;top:56px;width:39px;height:11px;background:#fff"></div>
<div class="a" style="left:1158px;top:56px;font-size:10px;line-height:12px;color:#000;transform:scaleX(0.91);transform-origin:0 0">0.96530</div>
<div class="a" style="left:259px;top:660px;font-size:10px;line-height:12px;color:#fff;transform:scaleX(0.91);transform-origin:0 0">19 Jun 2012</div>
<div class="a" style="left:323px;top:660px;font-size:10px;line-height:12px;color:#fff;transform:scaleX(0.91);transform-origin:0 0">20 Jun 05:00</div>
<div class="a" style="left:387px;top:660px;font-size:10px;line-height:12px;color:#fff;transform:scaleX(0.91);transform-origin:0 0">20 Jun 21:00</div>
<div class="a" style="left:451px;top:660px;font-size:10px;line-height:12px;color:#fff;transform:scaleX(0.91);transform-origin:0 0">21 Jun 13:00</div>
<div class="a" style="left:515px;top:660px;font-size:10px;line-height:12px;color:#fff;transform:scaleX(0.91);transform-origin:0 0">22 Jun 05:00</div>
<div class="a" style="left:579px;top:660px;font-size:10px;line-height:12px;color:#fff;transform:scaleX(0.91);transform-origin:0 0">22 Jun 21:00</div>
<div class="a" style="left:643px;top:660px;font-size:10px;line-height:12px;color:#fff;transform:scaleX(0.91);transform-origin:0 0">25 Jun 14:00</div>
<div class="a" style="left:707px;top:660px;font-size:10px;line-height:12px;color:#fff;transform:scaleX(0.91);transform-origin:0 0">26 Jun 06:00</div>
<div class="a" style="left:771px;top:660px;font-size:10px;line-height:12px;color:#fff;transform:scaleX(0.91);transform-origin:0 0">26 Jun 22:00</div>
<div class="a" style="left:835px;top:660px;font-size:10px;line-height:12px;color:#fff;transform:scaleX(0.91);transform-origin:0 0">27 Jun 14:00</div>
<div class="a" style="left:899px;top:660px;font-size:10px;line-height:12px;color:#fff;transform:scaleX(0.91);transform-origin:0 0">28 Jun 06:00</div>
<div class="a" style="left:963px;top:660px;font-size:10px;line-height:12px;color:#fff;transform:scaleX(0.91);transform-origin:0 0">28 Jun 22:00</div>
<div class="a" style="left:264px;top:45px;font-size:9.8px;line-height:12px;color:#ddd">#47088474</div>
<div class="a" style="left:264px;top:108px;font-size:9.8px;line-height:12px;color:#ddd">#47077809</div>
<div class="a" style="left:256px;top:674px;width:938px;height:22px;background:#ececec;border-top:1px solid #fff"></div>
<div class="a" style="left:256px;top:676px;width:938px;height:1px;background:#000"></div>
<div class="a" style="left:255px;top:674px;width:1px;height:22px;background:#666"></div>
<div class="a" style="left:269px;top:679px;font-size:10.3px;line-height:12px;color:#707070">EURUSD,H4</div>
<div class="a" style="left:348px;top:679px;font-size:10.3px;line-height:12px;color:#707070">EURUSD_Ask,M1</div>
<div class="a" style="left:453px;top:679px;font-size:10.3px;line-height:12px;color:#707070">GBPUSD,M1</div>
<div class="a" style="left:531px;top:679px;font-size:10.3px;line-height:12px;color:#707070">USDJPY,M1</div>
<div class="a" style="left:598px;top:676px;width:80px;height:19px;background:#fff;border:1px solid #000;border-top:none"></div>
<div class="a" style="left:609px;top:679px;font-size:10.3px;line-height:12px;color:#000">USDCHF,H1</div>
<div class="a" style="left:688px;top:679px;font-size:10.3px;line-height:12px;color:#707070">USDCAD,M15</div>
<div class="a" style="left:775px;top:679px;font-size:10.3px;line-height:12px;color:#707070">AUDUSD,M5</div>
<div class="a" style="left:856px;top:679px;font-size:10.3px;line-height:12px;color:#707070">NZDUSD,M5</div>
<div class="a" style="left:937px;top:679px;font-size:10.3px;line-height:12px;color:#707070">GBPCHF,H4</div>
<div class="a" style="left:1016px;top:679px;font-size:10.3px;line-height:12px;color:#707070">GBPJPY,H4</div>
<div class="a" style="left:1092px;top:679px;font-size:10.3px;line-height:12px;color:#707070">EURAUD,H4</div>
<div class="a" style="left:339px;top:679px;width:1px;height:11px;background:#808080"></div>
<div class="a" style="left:443px;top:679px;width:1px;height:11px;background:#808080"></div>
<div class="a" style="left:522px;top:679px;width:1px;height:11px;background:#808080"></div>
<div class="a" style="left:766px;top:679px;width:1px;height:11px;background:#808080"></div>
<div class="a" style="left:846px;top:679px;width:1px;height:11px;background:#808080"></div>
<div class="a" style="left:926px;top:679px;width:1px;height:11px;background:#808080"></div>
<div class="a" style="left:1006px;top:679px;width:1px;height:11px;background:#808080"></div>
<div class="a" style="left:1082px;top:679px;width:1px;height:11px;background:#808080"></div>
<div class="a" style="left:1164px;top:680px;font-size:8px;color:#aaa">&#9664;</div>
<div class="a" style="left:1182px;top:680px;font-size:8px;color:#000">&#9654;</div>
<div class="a" style="left:0;top:695px;width:1194px;height:1px;background:#c0c0c0"></div>
<div class="a" style="left:0;top:696px;width:1194px;height:126px;background:#f0f0f0"></div>
<div class="a" style="left:0;top:714px;width:9px;height:108px;background:#c9d9ea"></div>
<div class="a" style="left:0;top:698px;font-size:11px;font-weight:bold;color:#000">&#215;</div>
<div class="a" style="left:0;top:714px;width:9px;height:108px;overflow:hidden"><div class="a" style="left:-21px;top:96px;width:52px;transform:rotate(-90deg);font-size:11px;line-height:9px;color:#3a5a80;text-align:right">Terminal</div></div>
<div class="a" style="left:10px;top:700px;width:1182px;height:111px;background:#fff;border:1px solid #a0a0a0;border-right:none;border-bottom:none"></div>
<div class="a" style="left:11px;top:701px;width:1180px;height:24px;background:linear-gradient(#ffffff 0%,#ffffff 45%,#f3f4f6 46%,#f3f4f6 100%);border-bottom:1px solid #d5d5d5"></div>
<div class="a" style="left:163px;top:701px;width:1px;height:23px;background:#e2e4e7"></div>
<div class="a" style="left:163px;top:725px;width:1px;height:40px;background:#d8d8d8"></div>
<div class="a" style="left:422px;top:701px;width:1px;height:23px;background:#e2e4e7"></div>
<div class="a" style="left:422px;top:725px;width:1px;height:40px;background:#d8d8d8"></div>
<div class="a" style="left:528px;top:701px;width:1px;height:23px;background:#e2e4e7"></div>
<div class="a" style="left:528px;top:725px;width:1px;height:40px;background:#d8d8d8"></div>
<div class="a" style="left:610px;top:701px;width:1px;height:23px;background:#e2e4e7"></div>
<div class="a" style="left:610px;top:725px;width:1px;height:40px;background:#d8d8d8"></div>
<div class="a" style="left:716px;top:701px;width:1px;height:23px;background:#e2e4e7"></div>
<div class="a" style="left:716px;top:725px;width:1px;height:40px;background:#d8d8d8"></div>
<div class="a" style="left:834px;top:701px;width:1px;height:23px;background:#e2e4e7"></div>
<div class="a" style="left:834px;top:725px;width:1px;height:40px;background:#d8d8d8"></div>
<div class="a" style="left:952px;top:701px;width:1px;height:23px;background:#e2e4e7"></div>
<div class="a" style="left:952px;top:725px;width:1px;height:40px;background:#d8d8d8"></div>
<div class="a" style="left:1070px;top:701px;width:1px;height:23px;background:#e2e4e7"></div>
<div class="a" style="left:1070px;top:725px;width:1px;height:40px;background:#d8d8d8"></div>
<div class="a" style="left:1188px;top:701px;width:1px;height:23px;background:#e2e4e7"></div>
<div class="a" style="left:1188px;top:725px;width:1px;height:40px;background:#d8d8d8"></div>
<div class="a" style="left:18px;top:707px;font-size:10.8px;line-height:13px;color:#000;">Order</div>
<div class="a" style="left:58px;top:707px;font-size:8.0px;line-height:13px;color:#999;">&#8260;</div>
<div class="a" style="right:777px;top:707px;font-size:10.8px;line-height:13px;color:#000;">Time</div>
<div class="a" style="right:671px;top:707px;font-size:10.8px;line-height:13px;color:#000;">Type</div>
<div class="a" style="right:589px;top:707px;font-size:10.8px;line-height:13px;color:#000;">Size</div>
<div class="a" style="right:482px;top:707px;font-size:10.8px;line-height:13px;color:#000;">Symbol</div>
<div class="a" style="right:365px;top:707px;font-size:10.8px;line-height:13px;color:#000;">Price</div>
<div class="a" style="right:247px;top:707px;font-size:10.8px;line-height:13px;color:#000;">S / L</div>
<div class="a" style="right:129px;top:707px;font-size:10.8px;line-height:13px;color:#000;">T / P</div>
<div class="a" style="right:11px;top:707px;font-size:10.8px;line-height:13px;color:#000;">Price</div>
<div class="a" style="left:11px;top:745px;width:1180px;height:20px;background:#3399ff"></div>
<div class="a" style="left:163px;top:745px;width:1px;height:20px;background:#8cc2f5"></div>
<div class="a" style="left:422px;top:745px;width:1px;height:20px;background:#8cc2f5"></div>
<div class="a" style="left:528px;top:745px;width:1px;height:20px;background:#8cc2f5"></div>
<div class="a" style="left:610px;top:745px;width:1px;height:20px;background:#8cc2f5"></div>
<div class="a" style="left:716px;top:745px;width:1px;height:20px;background:#8cc2f5"></div>
<div class="a" style="left:834px;top:745px;width:1px;height:20px;background:#8cc2f5"></div>
<div class="a" style="left:952px;top:745px;width:1px;height:20px;background:#8cc2f5"></div>
<div class="a" style="left:1070px;top:745px;width:1px;height:20px;background:#8cc2f5"></div>
<div class="a" style="left:36px;top:728px;font-size:10.8px;line-height:13px;color:#000;">47077809</div>
<div class="a" style="left:36px;top:748px;font-size:10.8px;line-height:13px;color:#fff;">47088474</div>
<div class="a" style="right:775px;top:728px;font-size:10.8px;line-height:13px;color:#000;">2012.06.28 01:35</div>
<div class="a" style="right:775px;top:748px;font-size:10.8px;line-height:13px;color:#fff;">2012.06.29 00:38</div>
<div class="a" style="right:669px;top:728px;font-size:10.8px;line-height:13px;color:#000;">sell</div>
<div class="a" style="right:669px;top:748px;font-size:10.8px;line-height:13px;color:#fff;">buy</div>
<div class="a" style="right:588px;top:728px;font-size:10.8px;line-height:13px;color:#000;">3.00</div>
<div class="a" style="right:588px;top:748px;font-size:10.8px;line-height:13px;color:#fff;">5.00</div>
<div class="a" style="right:481px;top:728px;font-size:10.8px;line-height:13px;color:#000;">usdchf</div>
<div class="a" style="right:481px;top:748px;font-size:10.8px;line-height:13px;color:#fff;">usdchf</div>
<div class="a" style="right:363px;top:728px;font-size:10.8px;line-height:13px;color:#000;">0.9630</div>
<div class="a" style="right:363px;top:748px;font-size:10.8px;line-height:13px;color:#fff;">0.9655</div>
<div class="a" style="right:245px;top:728px;font-size:10.8px;line-height:13px;color:#000;">0.0000</div>
<div class="a" style="right:245px;top:748px;font-size:10.8px;line-height:13px;color:#fff;">0.0000</div>
<div class="a" style="right:128px;top:728px;font-size:10.8px;line-height:13px;color:#000;">0.0000</div>
<div class="a" style="right:128px;top:748px;font-size:10.8px;line-height:13px;color:#fff;">0.0000</div>
<div class="a" style="right:10px;top:728px;font-size:10.8px;line-height:13px;color:#000;">0.9656</div>
<div class="a" style="right:10px;top:748px;font-size:10.8px;line-height:13px;color:#fff;">0.9653</div>
<svg class="a" style="left:14px;top:727px" width="16" height="16" viewBox="0 0 16 16"><path d="M1.5 1.5 H8.5 L11.5 4.5 V13.5 H1.5 Z" fill="#fff" stroke="#555" stroke-width="1"/><circle cx="11" cy="12" r="3.3" fill="#e8531c" stroke="#a83010" stroke-width="0.8"/></svg>
<svg class="a" style="left:14px;top:747px" width="16" height="16" viewBox="0 0 16 16"><path d="M1.5 1.5 H8.5 L11.5 4.5 V13.5 H1.5 Z" fill="#fff" stroke="#ccc" stroke-width="1"/><circle cx="11" cy="12" r="3.3" fill="#3aa0e8" stroke="#1060b0" stroke-width="0.8"/></svg>
<div class="a" style="left:11px;top:765px;width:1180px;height:20px;background:#c8c8c8"></div>
<svg class="a" style="left:14px;top:767px" width="14" height="16" viewBox="0 0 14 16"><rect x="0.5" y="0.5" width="12" height="14" fill="#fff" stroke="#666"/><path d="M6.5 3 V8 M3.5 7 L6.5 11 L9.5 7 Z" stroke="#d83a10" fill="#f06020" stroke-width="2"/></svg>
<div class="a" style="left:36px;top:768px;font-size:10.8px;line-height:13px;color:#000;font-weight:bold;">Balance: 47&nbsp;503.03&nbsp;&nbsp;Equity: 46&nbsp;585.28&nbsp;&nbsp;Margin: 5&nbsp;000.00&nbsp;&nbsp;Free margin: 41&nbsp;585.28&nbsp;&nbsp;Margin level: 931.71%</div>
<div class="a" style="left:11px;top:794px;width:1180px;height:16px;background:#ececec;border-top:1px solid #e0e0e0"></div>
<div class="a" style="left:16px;top:797px;font-size:8px;color:#444">&#9664;</div>
<div class="a" style="left:1180px;top:797px;font-size:8px;color:#444">&#9654;</div>
<div class="a" style="left:29px;top:795px;width:709px;height:15px;border:1px solid #9a9a9a;border-radius:2px;background:linear-gradient(#f4f4f4,#e2e2e2 50%,#d6d6d6 51%,#dedede)"></div>
<div class="a" style="left:381px;top:799px;width:7px;height:7px;border-left:1px solid #666;border-right:1px solid #666"><div style="margin-left:2px;width:1px;height:7px;background:#666"></div></div>
<div class="a" style="left:59px;top:811px;width:1132px;height:1px;background:#000"></div>
<div class="a" style="left:11px;top:811px;width:49px;height:11px;background:#fff;border-left:1px solid #000;border-right:1px solid #000"></div>
<div class="a" style="left:22px;top:813px;font-size:11.0px;line-height:13px;color:#000;">Trade</div>
<div class="a" style="left:70px;top:814px;font-size:11.0px;line-height:13px;color:#707070;">Account History</div>
<div class="a" style="left:167px;top:814px;font-size:11.0px;line-height:13px;color:#707070;">Alerts</div>
<div class="a" style="left:214px;top:814px;font-size:11.0px;line-height:13px;color:#707070;">Mailbox</div>
<div class="a" style="left:271px;top:814px;font-size:11.0px;line-height:13px;color:#707070;">Journal</div>
<div class="a" style="left:157px;top:815px;width:1px;height:7px;background:#888"></div>
<div class="a" style="left:205px;top:815px;width:1px;height:7px;background:#888"></div>
<div class="a" style="left:261px;top:815px;width:1px;height:7px;background:#888"></div>
<div class="a" style="left:316px;top:815px;width:1px;height:7px;background:#888"></div>
<div class="a" style="left:305px;top:49px;width:767px;height:385px;border-radius:7px 7px 6px 6px;border:1px solid #b4b8b9;background:linear-gradient(180deg,#1f2726 0px,#1a2020 12px,#131617 26px,#181c1e 100%);overflow:hidden"><div class="a" style="left:0;top:0;width:300px;height:60px;background:radial-gradient(ellipse 210px 44px at 10px 18px,rgba(170,176,178,0.85),rgba(110,116,118,0.45) 40%,rgba(60,66,68,0.15) 75%,rgba(60,66,68,0) 100%)"></div><div class="a" style="left:0;top:0;width:6px;height:120px;background:linear-gradient(180deg,rgba(150,156,158,0.9),rgba(90,96,98,0.5) 40%,rgba(30,34,36,0) 100%)"></div><div class="a" style="left:140px;top:1px;width:470px;height:14px;background:linear-gradient(90deg,rgba(60,110,80,0) 0%,rgba(60,110,80,0.12) 20%,rgba(60,110,80,0.05) 50%,rgba(60,110,80,0.12) 80%,rgba(60,110,80,0) 100%)"></div><div class="a" style="left:600px;top:0;width:52px;height:27px;background:linear-gradient(90deg,rgba(70,150,85,0) 0%,rgba(70,150,85,0.75) 22%,rgba(60,130,75,0.5) 45%,rgba(70,150,85,0.7) 70%,rgba(70,150,85,0) 100%);-webkit-mask-image:linear-gradient(180deg,rgba(0,0,0,0.9),rgba(0,0,0,0.6) 60%,rgba(0,0,0,0.3))"></div><div class="a" style="left:648px;top:8px;width:24px;height:19px;background:radial-gradient(ellipse 10px 12px at 12px 12px,rgba(70,160,90,0.7),rgba(40,80,50,0) 100%)"></div><div class="a" style="left:140px;top:374px;width:40px;height:10px;background:radial-gradient(ellipse 14px 8px at 20px 8px,rgba(70,160,90,0.7),rgba(40,80,50,0) 100%)"></div></div>
<div class="a" style="left:312px;top:56px;font-size:12.3px;line-height:15px;color:#111;text-shadow:0 0 5px rgba(220,225,225,0.9),0 0 9px rgba(200,205,205,0.6)">Order</div>
<div class="a" style="left:962px;top:49px;width:105px;height:19px;border:1px solid rgba(190,196,196,0.8);border-top:none;border-radius:0 0 5px 5px;background:linear-gradient(rgba(90,96,98,0.35),rgba(60,66,68,0.25))"></div>
<div class="a" style="left:991px;top:49px;width:1px;height:18px;background:rgba(170,176,176,0.8)"></div>
<div class="a" style="left:1018px;top:49px;width:1px;height:18px;background:rgba(170,176,176,0.8)"></div>
<div class="a" style="left:973px;top:59px;width:10px;height:3px;background:#f4f4f4"></div>
<div class="a" style="left:1000px;top:54px;width:10px;height:8px;border:2px solid #8a8f90;background:#3a3f41"></div>
<svg class="a" style="left:1036px;top:52px" width="14" height="12" viewBox="0 0 14 12"><path d="M2.5 2 L11.5 10.5 M11.5 2 L2.5 10.5" stroke="#f4f4f4" stroke-width="2.6"/></svg>
<div class="a" style="left:310px;top:76px;width:757px;height:353px;border:1px solid #c8cccc;box-shadow:inset 0 0 0 1px #2a2e30;background:#f0f0f0"></div><div class="a" style="left:312px;top:78px;width:753px;height:349px;background:#f0f0f0"></div>
<div class="a" style="left:321px;top:91px;width:298px;height:328px;background:#fff;border-top:2px solid #a0a0a0;border-left:2px solid #a0a0a0;border-right:1px solid #fff;border-bottom:1px solid #fff"></div>
<svg class="a" style="left:0;top:0" width="1194" height="822" viewBox="0 0 1194 822" shape-rendering="crispEdges">
<line x1="325" y1="125.5" x2="577" y2="125.5" stroke="#c6c6c6" stroke-dasharray="3 3"/>
<line x1="325" y1="157.5" x2="577" y2="157.5" stroke="#c6c6c6" stroke-dasharray="3 3"/>
<line x1="325" y1="189.5" x2="577" y2="189.5" stroke="#c6c6c6" stroke-dasharray="3 3"/>
<line x1="325" y1="221.5" x2="577" y2="221.5" stroke="#c6c6c6" stroke-dasharray="3 3"/>
<line x1="325" y1="253.5" x2="577" y2="253.5" stroke="#c6c6c6" stroke-dasharray="3 3"/>
<line x1="325" y1="285.5" x2="577" y2="285.5" stroke="#c6c6c6" stroke-dasharray="3 3"/>
<line x1="325" y1="317.5" x2="577" y2="317.5" stroke="#c6c6c6" stroke-dasharray="3 3"/>
<line x1="325" y1="349.5" x2="577" y2="349.5" stroke="#c6c6c6" stroke-dasharray="3 3"/>
<line x1="325" y1="381.5" x2="577" y2="381.5" stroke="#c6c6c6" stroke-dasharray="3 3"/>
<line x1="357.5" y1="96" x2="357.5" y2="413" stroke="#c6c6c6" stroke-dasharray="3 3"/>
<line x1="389.5" y1="96" x2="389.5" y2="413" stroke="#c6c6c6" stroke-dasharray="3 3"/>
<line x1="421.5" y1="96" x2="421.5" y2="413" stroke="#c6c6c6" stroke-dasharray="3 3"/>
<line x1="453.5" y1="96" x2="453.5" y2="413" stroke="#c6c6c6" stroke-dasharray="3 3"/>
<line x1="485.5" y1="96" x2="485.5" y2="413" stroke="#c6c6c6" stroke-dasharray="3 3"/>
<line x1="517.5" y1="96" x2="517.5" y2="413" stroke="#c6c6c6" stroke-dasharray="3 3"/>
<line x1="549.5" y1="96" x2="549.5" y2="413" stroke="#c6c6c6" stroke-dasharray="3 3"/>
<rect x="324.5" y="95.5" width="253" height="319" fill="none" stroke="#000" stroke-width="1"/>
<line x1="578" y1="125.5" x2="581" y2="125.5" stroke="#000"/>
<line x1="578" y1="157.5" x2="581" y2="157.5" stroke="#000"/>
<line x1="578" y1="189.5" x2="581" y2="189.5" stroke="#000"/>
<line x1="578" y1="221.5" x2="581" y2="221.5" stroke="#000"/>
<line x1="578" y1="253.5" x2="581" y2="253.5" stroke="#000"/>
<line x1="578" y1="285.5" x2="581" y2="285.5" stroke="#000"/>
<line x1="578" y1="317.5" x2="581" y2="317.5" stroke="#000"/>
<line x1="578" y1="349.5" x2="581" y2="349.5" stroke="#000"/>
<line x1="578" y1="381.5" x2="581" y2="381.5" stroke="#000"/>
<line x1="578" y1="413.5" x2="581" y2="413.5" stroke="#000"/>
<path d="M325 364.5 H354 M325 371.5 H354 M354 370.5 H362 M354 376.5 H362 M362 364.5 H371 M362 371.5 H371 M371 357.5 H378 M371 364.5 H378 M378 364.5 H383 M378 371.5 H383 M383 370.5 H388 M383 376.5 H388 M388 376.5 H395 M388 382.5 H395 M395 382.5 H409 M395 389.5 H409 M409 389.5 H418 M409 395.5 H418 M420 133.5 H432 M420 139.5 H432 M432 139.5 H439 M432 146.5 H439" fill="none" stroke="rgba(224,116,116,0.55)" stroke-width="1"/>
<path d="M325.5 364 V372 M327.5 364 V372 M329.5 364 V372 M331.5 364 V372 M333.5 364 V372 M335.5 364 V372 M337.5 364 V372 M339.5 364 V372 M341.5 364 V372 M343.5 364 V372 M345.5 364 V372 M347.5 364 V372 M349.5 364 V372 M351.5 364 V372 M353.5 364 V372 M354.5 370 V377 M356.5 370 V377 M358.5 370 V377 M360.5 370 V377 M362.5 364 V372 M364.5 364 V372 M366.5 364 V372 M368.5 364 V372 M370.5 364 V372 M371.5 357 V365 M373.5 357 V365 M375.5 357 V365 M377.5 357 V365 M378.5 364 V372 M380.5 364 V372 M382.5 364 V372 M383.5 370 V377 M385.5 370 V377 M387.5 370 V377 M388.5 376 V383 M390.5 376 V383 M392.5 376 V383 M394.5 376 V383 M395.5 382 V390 M397.5 382 V390 M399.5 382 V390 M401.5 382 V390 M403.5 382 V390 M405.5 382 V390 M407.5 382 V390 M409.5 389 V396 M411.5 389 V396 M413.5 389 V396 M415.5 389 V396 M417.5 389 V396 M420.5 133 V140 M422.5 133 V140 M424.5 133 V140 M426.5 133 V140 M428.5 133 V140 M430.5 133 V140 M432.5 139 V147 M434.5 139 V147 M436.5 139 V147 M438.5 139 V147" fill="none" stroke="#e07474" stroke-width="1"/>
<path d="M419.5 396 V133 M439.5 146 V152.5 H577" fill="none" stroke="#e07474" stroke-width="1"/>
<path d="M325 346.5 H354 M325 353.5 H354 M354 352.5 H362 M354 358.5 H362 M362 346.5 H371 M362 353.5 H371 M371 339.5 H378 M371 346.5 H378 M378 346.5 H383 M378 353.5 H383 M383 352.5 H388 M383 358.5 H388 M388 358.5 H395 M388 364.5 H395 M395 364.5 H409 M395 371.5 H409 M409 371.5 H418 M409 377.5 H418 M420 114.5 H432 M420 121.5 H432 M432 121.5 H439 M432 127.5 H439" fill="none" stroke="rgba(31,95,174,0.55)" stroke-width="1"/>
<path d="M325.5 346 V354 M327.5 346 V354 M329.5 346 V354 M331.5 346 V354 M333.5 346 V354 M335.5 346 V354 M337.5 346 V354 M339.5 346 V354 M341.5 346 V354 M343.5 346 V354 M345.5 346 V354 M347.5 346 V354 M349.5 346 V354 M351.5 346 V354 M353.5 346 V354 M354.5 352 V359 M356.5 352 V359 M358.5 352 V359 M360.5 352 V359 M362.5 346 V354 M364.5 346 V354 M366.5 346 V354 M368.5 346 V354 M370.5 346 V354 M371.5 339 V347 M373.5 339 V347 M375.5 339 V347 M377.5 339 V347 M378.5 346 V354 M380.5 346 V354 M382.5 346 V354 M383.5 352 V359 M385.5 352 V359 M387.5 352 V359 M388.5 358 V365 M390.5 358 V365 M392.5 358 V365 M394.5 358 V365 M395.5 364 V372 M397.5 364 V372 M399.5 364 V372 M401.5 364 V372 M403.5 364 V372 M405.5 364 V372 M407.5 364 V372 M409.5 371 V378 M411.5 371 V378 M413.5 371 V378 M415.5 371 V378 M417.5 371 V378 M420.5 114 V122 M422.5 114 V122 M424.5 114 V122 M426.5 114 V122 M428.5 114 V122 M430.5 114 V122 M432.5 121 V128 M434.5 121 V128 M436.5 121 V128 M438.5 121 V128" fill="none" stroke="#1f5fae" stroke-width="1"/>
<path d="M419.5 378 V114 M439.5 127 V133.5 H577" fill="none" stroke="#1f5fae" stroke-width="1"/>
</svg>
<div class="a" style="left:327px;top:96px;font-size:10.1px;line-height:12px;color:#000">USDCHF</div>
<div class="a" style="left:582px;top:119px;font-size:9.5px;line-height:12px;color:#000">0.9656</div>
<div class="a" style="left:582px;top:151px;font-size:9.5px;line-height:12px;color:#000">0.9651</div>
<div class="a" style="left:582px;top:183px;font-size:9.5px;line-height:12px;color:#000">0.9646</div>
<div class="a" style="left:582px;top:215px;font-size:9.5px;line-height:12px;color:#000">0.9641</div>
<div class="a" style="left:582px;top:247px;font-size:9.5px;line-height:12px;color:#000">0.9636</div>
<div class="a" style="left:582px;top:279px;font-size:9.5px;line-height:12px;color:#000">0.9630</div>
<div class="a" style="left:582px;top:311px;font-size:9.5px;line-height:12px;color:#000">0.9625</div>
<div class="a" style="left:582px;top:343px;font-size:9.5px;line-height:12px;color:#000">0.9620</div>
<div class="a" style="left:582px;top:375px;font-size:9.5px;line-height:12px;color:#000">0.9615</div>
<div class="a" style="left:582px;top:404px;font-size:9.5px;line-height:12px;color:#000">0.9610</div>
<div class="a" style="left:579px;top:128px;width:36px;height:11px;background:#1a64d8"></div>
<div class="a" style="left:581px;top:127px;font-size:9.5px;line-height:12px;color:#fff">0.9655</div>
<div class="a" style="left:579px;top:147px;width:36px;height:11px;background:#e86464"></div>
<div class="a" style="left:581px;top:146px;font-size:9.5px;line-height:12px;color:#fff">0.9652</div>
<div class="a" style="right:478px;top:94px;font-size:10.6px;line-height:14px;color:#000">Symbol:</div>
<div class="a" style="right:478px;top:120px;font-size:10.6px;line-height:14px;color:#000">Volume:</div>
<div class="a" style="right:478px;top:146px;font-size:10.6px;line-height:14px;color:#000">Stop Loss:</div>
<div class="a" style="right:478px;top:172px;font-size:10.6px;line-height:14px;color:#000">Comment:</div>
<div class="a" style="right:478px;top:198px;font-size:10.6px;line-height:14px;color:#000">Type:</div>
<div class="a" style="right:260px;top:146px;font-size:10.6px;line-height:14px;color:#000">Take Profit:</div>
<div class="a" style="left:725px;top:92px;width:323px;height:20px;border:1px solid #707070;border-radius:3px;background:linear-gradient(#f2f2f2,#ebebeb 50%,#dddddd 51%,#cfcfcf)"></div>
<div class="a" style="left:729px;top:95px;font-size:10.6px;line-height:14px;color:#000">USDCHF, US Dollar vs Swiss Franc</div>
<div class="a" style="left:1035px;top:100px;width:0;height:0;border-left:4px solid transparent;border-right:4px solid transparent;border-top:4px solid #000"></div>
<div class="a" style="left:725px;top:118px;width:105px;height:20px;border:1px solid #c8cbd0;border-top-color:#abadb3;background:#fff"></div>
<div class="a" style="left:731px;top:121px;font-size:10.6px;line-height:14px;color:#000">5.00</div>
<div class="a" style="left:817px;top:126px;width:0;height:0;border-left:4px solid transparent;border-right:4px solid transparent;border-top:4px solid #000"></div>
<div class="a" style="left:725px;top:143px;width:88px;height:20px;border:1px solid #c8cbd0;border-top-color:#abadb3;background:#fff"></div>
<div class="a" style="right:386px;top:147px;font-size:10.6px;line-height:14px;color:#000">0.0000</div>
<div class="a" style="left:812px;top:143px;width:17px;height:19px;border:1px solid #c8cbd0;background:#f4f4f4"></div><div class="a" style="left:813px;top:144px;width:15px;height:8px;border:1px solid #a6a6a6;border-radius:2px;background:linear-gradient(#f8f8f8,#e0e0e0)"></div><div class="a" style="left:813px;top:153px;width:15px;height:8px;border:1px solid #a6a6a6;border-radius:2px;background:linear-gradient(#f8f8f8,#e0e0e0)"></div><div class="a" style="left:818px;top:146px;width:0;height:0;border-left:3px solid transparent;border-right:3px solid transparent;border-bottom:3px solid #555"></div><div class="a" style="left:818px;top:156px;width:0;height:0;border-left:3px solid transparent;border-right:3px solid transparent;border-top:3px solid #555"></div>
<div class="a" style="left:942px;top:143px;width:88px;height:20px;border:1px solid #c8cbd0;border-top-color:#abadb3;background:#fff"></div>
<div class="a" style="right:169px;top:147px;font-size:10.6px;line-height:14px;color:#000">0.0000</div>
<div class="a" style="left:1029px;top:143px;width:17px;height:19px;border:1px solid #c8cbd0;background:#f4f4f4"></div><div class="a" style="left:1030px;top:144px;width:15px;height:8px;border:1px solid #a6a6a6;border-radius:2px;background:linear-gradient(#f8f8f8,#e0e0e0)"></div><div class="a" style="left:1030px;top:153px;width:15px;height:8px;border:1px solid #a6a6a6;border-radius:2px;background:linear-gradient(#f8f8f8,#e0e0e0)"></div><div class="a" style="left:1035px;top:146px;width:0;height:0;border-left:3px solid transparent;border-right:3px solid transparent;border-bottom:3px solid #555"></div><div class="a" style="left:1035px;top:156px;width:0;height:0;border-left:3px solid transparent;border-right:3px solid transparent;border-top:3px solid #555"></div>
<div class="a" style="left:725px;top:169px;width:323px;height:20px;border:1px solid #c8cbd0;border-top-color:#abadb3;background:#fff"></div>
<div class="a" style="left:725px;top:195px;width:323px;height:21px;border:1px solid #c2c2c2;border-radius:3px;background:#f4f4f4"></div>
<div class="a" style="left:729px;top:199px;font-size:10.6px;line-height:14px;color:#6d6d6d">Instant Execution</div>
<div class="a" style="left:1035px;top:204px;width:0;height:0;border-left:4px solid transparent;border-right:4px solid transparent;border-top:4px solid #a0a0a0"></div>
<div class="a" style="left:627px;top:231px;width:427px;height:188px;border:1px solid #d5dfe5;border-radius:3px;box-shadow:inset 1px 1px 0 #fff,1px 1px 0 #fff"></div>
<div class="a" style="left:632px;top:224px;padding:0 3px;font-size:10.6px;line-height:14px;color:#000;background:#f0f0f0">Order Execution</div>
<div class="a" style="left:628px;top:249px;width:426px;text-align:center;font-size:16.2px;line-height:21px;color:#000">#47088474 buy 5.00 USDCHF at 0.9655<br>successful</div>
<div class="a" style="left:643px;top:347px;width:186px;height:21px;border:1px solid #707070;border-radius:3px;background:linear-gradient(#f2f2f2,#ebebeb 50%,#dddddd 51%,#cfcfcf);box-shadow:inset 0 0 0 1px #fcfcfc"></div><div class="a" style="left:643px;top:350px;width:186px;text-align:center;font-size:10.6px;line-height:14px;color:#000">OK</div>
<div class="a" style="left:853px;top:347px;width:186px;height:21px;border:1px solid #707070;border-radius:3px;background:linear-gradient(#f2f2f2,#ebebeb 50%,#dddddd 51%,#cfcfcf);box-shadow:inset 0 0 0 1px #fcfcfc"></div><div class="a" style="left:853px;top:350px;width:186px;text-align:center;font-size:10.6px;line-height:14px;color:#000">Print</div>
<div class="a" style="left:628px;top:378px;width:416px;text-align:center;font-size:10.95px;line-height:14px;color:#000">You can print out this information by pressing "Print" button.</div>
</body></html>
